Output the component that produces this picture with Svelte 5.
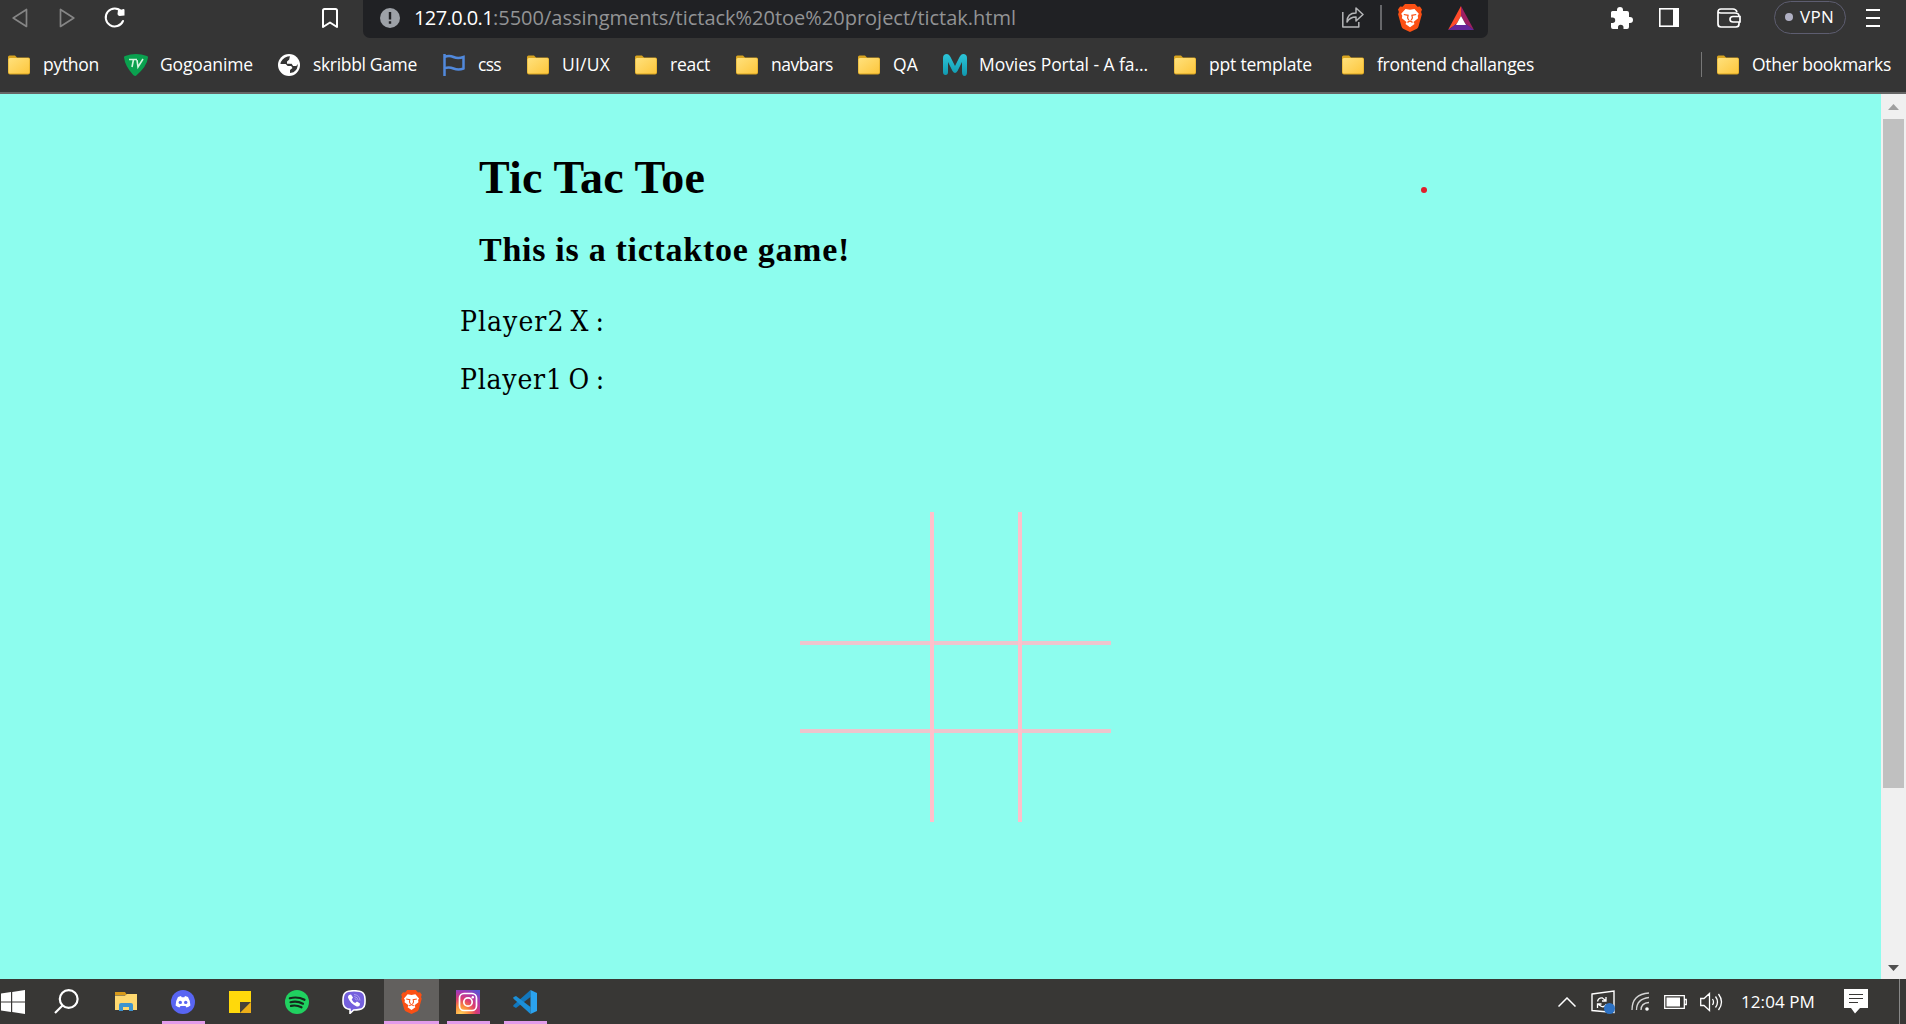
<script>
  // Bookmarks: icon kind, label, space before the icon, space before the label, label width
  const bookmarks = [
    { icon: 'folder', label: 'python', before: 8, iconWidth: 22, gap: 13, width: 56 },
    { icon: 'tv', label: 'Gogoanime', before: 25, iconWidth: 24, gap: 12, width: 93 },
    { icon: 'globe', label: 'skribbl Game', before: 25, iconWidth: 22, gap: 13, width: 104 },
    { icon: 'flag', label: 'css', before: 26, iconWidth: 22, gap: 13, width: 23 },
    { icon: 'folder', label: 'UI/UX', before: 26, iconWidth: 22, gap: 13, width: 48 },
    { icon: 'folder', label: 'react', before: 25, iconWidth: 22, gap: 13, width: 40 },
    { icon: 'folder', label: 'navbars', before: 26, iconWidth: 22, gap: 13, width: 62 },
    { icon: 'folder', label: 'QA', before: 25, iconWidth: 22, gap: 13, width: 25 },
    { icon: 'movies', label: 'Movies Portal - A fa...', before: 25, iconWidth: 24, gap: 12, width: 169 },
    { icon: 'folder', label: 'ppt template', before: 26, iconWidth: 22, gap: 13, width: 103 },
    { icon: 'folder', label: 'frontend challanges', before: 30, iconWidth: 22, gap: 13, width: 157 }
  ];

  const apps = [
    { name: 'explorer' },
    { name: 'discord', open: true },
    { name: 'notes' },
    { name: 'spotify' },
    { name: 'viber' },
    { name: 'brave', open: true, active: true },
    { name: 'instagram', open: true },
    { name: 'vscode', open: true }
  ];

  // Tracks a line of text so that it fills the given width
  function fit(node, width) {
    const natural = node.getBoundingClientRect().width;
    node.style.letterSpacing = (width - natural) / node.textContent.length + 'px';
  }
</script>

{#snippet lion()}
  <path fill="#fb5014" d="M7 0h10l2.5 2.8 2.4-.3L24 5.600l-.9 2.500.8 2.200-3.400 12.100a4 4 0 0 1-1.600 2.300L12 28l-6.900-3.300a4 4 0 0 1-1.600-2.300L.1 10.300l.8-2.200L0 5.600l2.100-3.100 2.400.3z" />
  <path fill="#fff" d="M7.500 5 12 5.800l4.500-.8 4.300 4.800-1.100 2 .4 2.400-4.600 3.700 1 2.200L12 23.200l-4.500-3.100 1-2.200-4.600-3.700.4-2.400-1.100-2z" />
  <path fill="none" stroke="#fb5014" stroke-width="1.200" d="m5.800 10.500 4.300.8-.5 2.700 1.200 2.200M18.200 10.500l-4.300.8.5 2.700-1.200 2.200M9.400 18.400 12 17l2.600 1.400" />
{/snippet}

{#snippet bookmarkIcon(kind)}
  {#if kind === 'folder'}
    <svg width="22" height="20" viewBox="0 0 22 20">
      <defs>
        <linearGradient id="gold" x2="1" y2="1"><stop stop-color="#ffe17c" /><stop offset="1" stop-color="#fdc63c" /></linearGradient>
      </defs>
      <path fill="#d9a520" d="M0 2Q0 .5 1.500.5H7l2 2h11.500q1.500 0 1.500 1.500v13.500q0 2-2 2H2q-2 0-2-2z" />
      <rect x=".5" y="3" width="21" height="15.500" rx="1.500" fill="url(#gold)" />
    </svg>
  {:else if kind === 'tv'}
    <svg width="24" height="22" viewBox="0 0 24 22">
      <path fill="#0aa14f" d="M1 2Q12-2 23 2q1 0 1 1.500-1 9-12 18.300-2 .5-3-1Q1 12 0 3.500 0 2 1 2z" />
      <path fill="none" stroke="#d5f5df" stroke-width="1.600" d="M5 5.500h8M9.500 5.500 8 13M13 6l1 7 5-8" />
    </svg>
  {:else if kind === 'globe'}
    <svg width="22" height="22" viewBox="0 0 22 22">
      <circle cx="11" cy="11" r="11" fill="#fff" />
      <path fill="#353535" d="M9.500 2.500 12 2.300l-.5 3.200-2.500 2v2.300l4.600 0 1.500 2.200h3.200l1.400-2q.5 5-4.200 8.200l-3.500.9v-3.200l2.500-1.900-1.300-2.100H9.700l-2-2H2.400Q3.300 4.800 9.500 2.500z" />
      <path fill="#fff" d="m12 2 5 2-2 4-3 1.500-2-2 1.500-2zM3 11l4 1 3 3-1 5-5-3z" />
    </svg>
  {:else if kind === 'flag'}
    <svg width="22" height="22" viewBox="0 0 22 22">
      <path fill="none" stroke="#5189dc" stroke-width="2.500" d="M1.500 0v22M1.500 3Q6 1 10.500 3t10 0v11.500q-5 2-10 0t-9 0" />
    </svg>
  {:else}
    <svg width="24" height="22" viewBox="0 0 24 22">
      <defs>
        <linearGradient id="aqua" y2="1" x2="0"><stop stop-color="#2cc5d9" /><stop offset="1" stop-color="#1098ae" /></linearGradient>
      </defs>
      <path fill="url(#aqua)" d="M0 4q0-4 4-4 2 0 3.500 3L12 12l4.500-9Q18 0 20 0q4 0 4 4v14q0 4-2.500 4T19 18V8l-4.500 9q-2.500 4-5 0L5 8v10q0 3-2.500 3T0 18z" />
    </svg>
  {/if}
{/snippet}

{#snippet appIcon(name)}
  {#if name === 'explorer'}
    <svg width="22" height="19" viewBox="0 0 22 19">
      <path fill="#d99a19" d="M0 0h10l2 3H0z" />
      <path fill="#ffd970" d="M0 3.500h10L12 2h10v16H0z" />
      <path fill="#3e94cf" d="M4 19v-6q0-2 2-2h10q2 0 2 2v6h-4v-4H8v4z" />
    </svg>
  {:else if name === 'discord'}
    <svg width="24" height="24" viewBox="0 0 24 24">
      <circle cx="12" cy="12" r="12" fill="#5865f2" />
      <path fill="#fff" d="m7 7 3-1 .7 1.200h2.600L14 6l3 1q2.500 4 2.400 8.500Q17.600 17.200 15.500 17.600l-1-1.500h-5l-1 1.500q-2.100-.4-3.900-2.100Q4.500 11 7 7z" />
      <circle cx="9.300" cy="12.400" r="1.700" fill="#5865f2" /><circle cx="14.700" cy="12.400" r="1.700" fill="#5865f2" />
    </svg>
  {:else if name === 'notes'}
    <svg width="22" height="22" viewBox="0 0 22 22">
      <path fill="#ffd90b" d="M0 0h22v11L11 22H0z" />
      <path fill="#454139" d="M11 11h11L11 22z" />
      <path fill="#edae18" d="M22 11v11H11z" />
    </svg>
  {:else if name === 'spotify'}
    <svg width="24" height="24" viewBox="0 0 24 24">
      <circle cx="12" cy="12" r="12" fill="#20d160" />
      <path fill="none" stroke="#15291c" stroke-linecap="round" stroke-width="2.200" d="M4.800 8.200q8-2 14.700 1.600M5.500 12.200q6.500-1.800 12.500 1.500M6 15.900q5.500-1.200 10.500 1.400" />
    </svg>
  {:else if name === 'viber'}
    <svg width="24" height="24" viewBox="0 0 24 24">
      <path fill="#7460dd" stroke="#fff" stroke-width="1.600" d="M6.500 1.200Q12 .3 17.500 1.200q4.500.8 5.200 5.200.7 4.600 0 8.200-.7 4-5 4.800-3 .6-6 .6L8 23.400v-4q-5.500-.7-6.600-4.800-.8-4.100 0-8.200Q2.200 2 6.500 1.200z" />
      <path fill="#fff" d="m7 5 2-.4 2 3-1.300 2q1 2.500 3.500 3.400l1.800-1.400 3 2-.3 2q-1.200 1.400-3 .8Q8 13.400 6 7.500q-.2-1.500 1-2.500z" />
      <path fill="none" stroke="#b3a6f0" stroke-width=".9" d="M12 4.500q5.500.5 6 6M12.300 6.500q3.500.5 4 4M12.600 8.500q1.500.2 1.800 1.800" />
    </svg>
  {:else if name === 'brave'}
    <svg width="21" height="24" viewBox="0 0 24 28">{@render lion()}</svg>
  {:else if name === 'instagram'}
    <svg width="24" height="24" viewBox="0 0 24 24">
      <defs>
        <radialGradient id="insta" cx=".2" cy="1" r="1.150">
          <stop stop-color="#ffd35c" /><stop offset=".3" stop-color="#fb8a3c" /><stop offset=".55" stop-color="#dd3c70" /><stop offset=".8" stop-color="#a939b3" /><stop offset="1" stop-color="#5b52cf" />
        </radialGradient>
      </defs>
      <rect width="24" height="24" fill="url(#insta)" />
      <g fill="none" stroke="#fff" stroke-width="1.700"><rect x="3.500" y="3.500" width="17" height="17" rx="4.500" /><circle cx="12" cy="12" r="4.200" /></g>
      <circle cx="16.800" cy="7.200" r="1.200" fill="#fff" />
    </svg>
  {:else}
    <svg width="24" height="24" viewBox="0 0 24 24">
      <path fill="#1277bd" d="M17.500 0v7L3 18 .3 16.500v-1.300z" />
      <path fill="#1b8fd8" d="M.3 8.500v-1.200L3 6l14.500 11v7z" />
      <path fill="#2ba2ee" d="m17.500 0 6.500 3v18l-6.500 3z" />
    </svg>
  {/if}
{/snippet}

<div class="screen">
  <header>
    <div class="toolbar">
      <svg class="back" width="16" height="20" viewBox="0 0 16 20"><path fill="none" stroke="#858585" stroke-width="1.700" stroke-linejoin="round" d="M14.500 1.500v17L1.200 10z" /></svg>
      <svg class="forward" width="16" height="20" viewBox="0 0 16 20"><path fill="none" stroke="#858585" stroke-width="1.700" stroke-linejoin="round" d="M1.500 1.500v17L14.800 10z" /></svg>
      <svg class="reload" width="22" height="22" viewBox="0 0 22 22">
        <path fill="none" stroke="#fff" stroke-width="2" stroke-linecap="round" d="M17.500 4.500A9 9 0 1 0 19 14" />
        <path fill="#fff" d="M14 3q1.500-1 3-.2L19.500 2q1 0 1 1v5.500l-5 .5q-2-.3-2-2z" />
      </svg>
      <svg class="save" width="16" height="20" viewBox="0 0 16 20"><path fill="none" stroke="#fff" stroke-width="2" stroke-linejoin="round" d="M1 2.500Q1 1 2.500 1h11Q15 1 15 2.500V19l-7-4.500L1 19z" /></svg>

      <div class="address">
        <svg class="info" width="20" height="20" viewBox="0 0 20 20"><circle cx="10" cy="10" r="10" fill="#9da1a7" /><path fill="#202124" d="M8.800 4h2.400v7.500H8.800zM8.800 13.300h2.400v2.400H8.800z" /></svg>
        <span class="host" use:fit={79}>127.0.0.1</span><span class="path" use:fit={523}>:5500/assingments/tictack%20toe%20project/tictak.html</span>
        <svg class="share" width="22" height="21" viewBox="0 0 22 21"><path fill="none" stroke="#b5b6b8" stroke-width="1.500" stroke-linejoin="round" d="M.8 5v15h16v-5M5 15q0-9 9-9V1l7 6.500-7 6.500v-4q-6 0-9 5z" /></svg>
        <i class="divider"></i>
        <svg class="shield" width="24" height="28" viewBox="0 0 24 28">{@render lion()}</svg>
        <svg class="rewards" width="26" height="24" viewBox="0 0 26 24"><path fill="#ff4b2b" d="M13 0v10l-4.500 8L0 24z" /><path fill="#9e1f63" d="M13 0v10l4.500 8L26 24z" /><path fill="#65279b" d="M0 24h26l-8-6H8z" /><path fill="#fff" d="m13 10 5 9H8z" /></svg>
      </div>

      <svg class="extensions" width="22" height="22" viewBox="0 0 22 22"><path fill="#fff" d="M0 5.500Q0 4 1.500 4H6V3q0-3 3-3t3 3v1h4q2 0 2 2v4h1q3 0 3 3t-3 3h-1v4q0 2-2 2h-3.500v-1.500q0-2.700-2.800-2.700T7 20.500V22H2q-2 0-2-2v-4h1.500q2.700 0 2.700-2.700T1.500 10.500H0z" /></svg>
      <svg class="sidebar" width="20" height="19" viewBox="0 0 20 19"><rect x=".8" y=".8" width="18.400" height="17.400" fill="none" stroke="#fff" stroke-width="1.600" /><path fill="#fff" d="M14 0h6v19h-6z" /></svg>
      <svg class="wallet" width="24" height="20" viewBox="0 0 24 20"><g fill="none" stroke="#fff" stroke-width="1.700"><path d="M1 4v12q0 3 3 3h15q3 0 3-3v-2M1 4q0-3 3-3h12q3 0 4 3M1 4q1 1 3 1h14q4 0 4 3v1" /><path d="M23 8.500h-7q-3 0-3 2.750T16 14h7z" /></g></svg>
      <div class="vpn"><i></i><span use:fit={34}>VPN</span></div>
      <svg class="menu" width="14" height="20" viewBox="0 0 14 20"><path stroke="#fff" stroke-width="2" d="M0 2h14M0 10h14M0 18h14" /></svg>
    </div>

    <nav class="bookmarks">
      {#each bookmarks as item}
        <span class="space" style="width: {item.before}px"></span>
        <a class="bookmark" href="#top" style="gap: {item.gap}px; width: {item.iconWidth + item.gap + item.width}px">
          {@render bookmarkIcon(item.icon)}<span use:fit={item.width}>{item.label}</span>
        </a>
      {/each}
      <i class="bar"></i>
      <a class="bookmark other" href="#top">{@render bookmarkIcon('folder')}<span use:fit={139}>Other bookmarks</span></a>
    </nav>
  </header>

  <div class="viewport">
    <main>
      <h1><span use:fit={226}>Tic Tac Toe</span></h1>
      <h2><span use:fit={371}>This is a tictaktoe game!</span></h2>
      <p><span use:fit={145}>Player2 X :</span></p>
      <p><span use:fit={145}>Player1 O :</span></p>
      <svg class="board" width="311" height="310" viewBox="0 0 311 310">
        <path fill="#eec5cd" d="M0 129h311v4H0zM0 217h311v4H0z" />
        <path fill="#ffc0cb" d="M130 0h4v310h-4zM218 0h4v310h-4z" />
      </svg>
      <i class="dot"></i>
    </main>
    <aside class="scrollbar">
      <svg width="11" height="6" viewBox="0 0 11 6"><path fill="#a0a0a0" d="M5.500 0 11 6H0z" /></svg>
      <div class="thumb"></div>
      <svg width="11" height="6" viewBox="0 0 11 6"><path fill="#505050" d="M5.500 6 11 0H0z" /></svg>
    </aside>
  </div>

  <footer>
    <svg class="start" width="24" height="24" viewBox="0 0 24 24"><path fill="#fff" d="m0 3.500 10-1.400v9.300H0zM11.200 1.900 24 0v11.400H11.200zM0 12.600h10v9.300L0 20.500zM11.200 12.600H24V24l-12.800-1.900z" /></svg>
    <svg class="search" width="25" height="25" viewBox="0 0 25 25"><g fill="none" stroke="#fff" stroke-width="2.200"><circle cx="14.700" cy="10" r="8.900" /><path d="M8.500 16.500 1 24" /></g></svg>
    <div class="apps">
      {#each apps as app}
        <div class="app" class:open={app.open} class:active={app.active}>{@render appIcon(app.name)}</div>
      {/each}
    </div>
    <div class="tray">
      <svg width="18" height="10" viewBox="0 0 18 10"><path fill="none" stroke="#fff" stroke-width="1.500" d="m.5 9.500 8.500-8.500 8.500 8.500" /></svg>
      <svg class="update" width="24" height="24" viewBox="0 0 24 24">
        <path fill="none" stroke="#fff" stroke-width="1.400" d="M1 4 23 1v21.500L1 20.500z" />
        <path fill="none" stroke="#fff" stroke-width="1.300" d="M6.500 11.500q1-4 5-3.500l3 2.500M15 7v4h-4M15.500 14q-2 3.500-5 2.500l-3-2M6.500 18v-4h4" />
        <circle cx="18.500" cy="18.500" r="5.500" fill="#2d72c4" />
      </svg>
      <svg class="wifi" width="18" height="19" viewBox="0 0 18 19"><g fill="none" stroke="#d5d5d5" stroke-width="1.300"><path d="M1 18Q1 2 18 1M5.500 18Q5.500 7 18 5.500M10 18q0-7 8-7.500" /></g><circle cx="16" cy="17" r="1.800" fill="#fff" /></svg>
      <svg class="battery" width="23" height="14" viewBox="0 0 23 14"><path fill="none" stroke="#fff" stroke-width="1.300" d="M.7.700h19.600v12.600H.7zM20.500 4.500h1.800v5h-1.800" /><path fill="#fff" d="M2.500 2.500H16v9H2.500z" /></svg>
      <svg class="speaker" width="23" height="20" viewBox="0 0 23 20"><g fill="none" stroke="#fff" stroke-width="1.300"><path d="M.7 6.500H4L9.500 1.500v17L4 13.500H.7zM12.500 7q2 3 0 6M15.500 4.500q4 5.500 0 11M18.500 2q6 8 0 16" /></g></svg>
      <time use:fit={74}>12:04 PM</time>
      <svg class="notice" width="24" height="25" viewBox="0 0 24 25"><path fill="#fff" d="M0 0h24v19h-8l-5 5.500L7 19H0z" /><path stroke="#383735" stroke-width="1.200" d="M5 5.500h14M5 9.500h14M5 13.500h9" /></svg>
      <i class="desktop"></i>
    </div>
  </footer>
</div>

<style>
  :global(body) { margin: 0; overflow: hidden; }
  .screen {
    width: 1906px;
    height: 1024px;
    display: flex;
    flex-direction: column;
    overflow: hidden;
    font-family: "Open Sans", "Noto Sans", sans-serif;
    color: #fff;
  }
  svg, i { display: block; flex: none; }
  span, time { white-space: nowrap; }

  header { height: 94px; flex: none; box-sizing: border-box; background: #353535; border-bottom: 2px solid #666; }
  .toolbar { display: flex; align-items: center; height: 38px; box-sizing: border-box; padding-bottom: 3px; }
  .back { margin-left: 12px; }
  .forward { margin-left: 31px; }
  .reload { margin-left: 29px; }
  .save { margin-left: 196px; }
  .address {
    display: flex;
    align-items: center;
    align-self: stretch;
    width: 1125px;
    box-sizing: border-box;
    margin: 0 0 -3px 25px;
    padding-bottom: 3px;
    background: #202124;
    border-radius: 0 0 7px 7px;
    font-size: 20px;
    line-height: 35px;
  }
  .info { margin: 0 14px 0 17px; }
  .path { color: #929395; }
  .share { margin-left: auto; }
  .divider { width: 2px; height: 25px; margin: 0 16px; background: #66676a; }
  .rewards { margin: 0 14px 0 26px; }
  .extensions { margin-left: 123px; }
  .sidebar { margin-left: 26px; }
  .wallet { margin-left: 38px; }
  .vpn {
    display: flex;
    align-items: center;
    width: 72px;
    height: 33px;
    box-sizing: border-box;
    margin-left: 33px;
    padding: 0 0 1px 10px;
    border: 1.500px solid #5d5d70;
    border-radius: 17px;
    font-size: 17px;
    line-height: 28px;
  }
  .vpn i { width: 8px; height: 8px; margin-right: 7px; border-radius: 50%; background: #b0b0c3; }
  .menu { margin-left: 20px; }

  .bookmarks { display: flex; align-items: center; height: 54px; box-sizing: border-box; padding-bottom: 1px; font-size: 17.500px; line-height: 24px; }
  .bookmark span { margin-top: -1px; }
  .space { flex: none; }
  .bookmark { display: flex; align-items: center; flex: none; color: #fff; text-decoration: none; }
  .bar { width: 1px; height: 25px; margin-left: auto; background: #777; }
  .other { gap: 13px; margin: 0 15px 0 15px; }

  .viewport { flex: 1; display: flex; min-height: 0; }
  main { position: relative; flex: 1; background: #8dfdee; color: #000; }
  h1, h2, p { margin: 0; }
  h1, h2 { padding-left: 479px; font-family: "Liberation Serif", serif; font-weight: 700; }
  h1 { padding-top: 57px; font-size: 46px; line-height: 54px; }
  h2 { padding-top: 25px; font-size: 34px; line-height: 40px; }
  p { padding: 34px 0 0 460px; font-family: "DejaVu Serif Condensed", "DejaVu Serif", serif; font-size: 28px; line-height: 36px; font-stretch: condensed; word-spacing: -3px; }
  p + p { padding-top: 22px; }
  .board { margin: 114px 0 0 800px; }
  .dot { position: absolute; left: 1421px; top: 93px; width: 6px; height: 6px; border-radius: 50%; background: #e01f2c; }
  .scrollbar { display: flex; flex-direction: column; align-items: center; width: 25px; box-sizing: border-box; padding: 10px 1px 8px 0; background: #f0f0f0; }
  .thumb { width: 21px; height: 669px; margin: 9px 0 auto; background: #c0c0c0; }

  footer { display: flex; align-items: center; height: 45px; flex: none; background: #383735; }
  .start { margin-left: 1px; }
  .search { margin-left: 29px; }
  .apps { display: flex; align-self: stretch; margin-left: 19px; }
  .app { display: flex; align-items: center; justify-content: center; width: 43px; margin: 0 7px; padding: 3px 1px 0 0; border-bottom: 3px solid transparent; box-sizing: border-box; }
  .app.open { border-color: #e29bea; }
  .app.active { width: 55px; margin: 0 1px; background: #62605e; background-clip: padding-box; }
  .tray { display: flex; align-items: center; align-self: stretch; margin-left: auto; font-size: 17px; line-height: 24px; }
  .update { margin-left: 15px; }
  .wifi { margin-left: 16px; }
  .battery { margin-left: 15px; }
  .speaker { margin-left: 13px; }
  .tray time { margin-left: 18px; }
  .notice { margin-left: 29px; }
  .desktop { align-self: stretch; width: 1px; margin: 0 6px 0 31px; background: #888; }
</style>
